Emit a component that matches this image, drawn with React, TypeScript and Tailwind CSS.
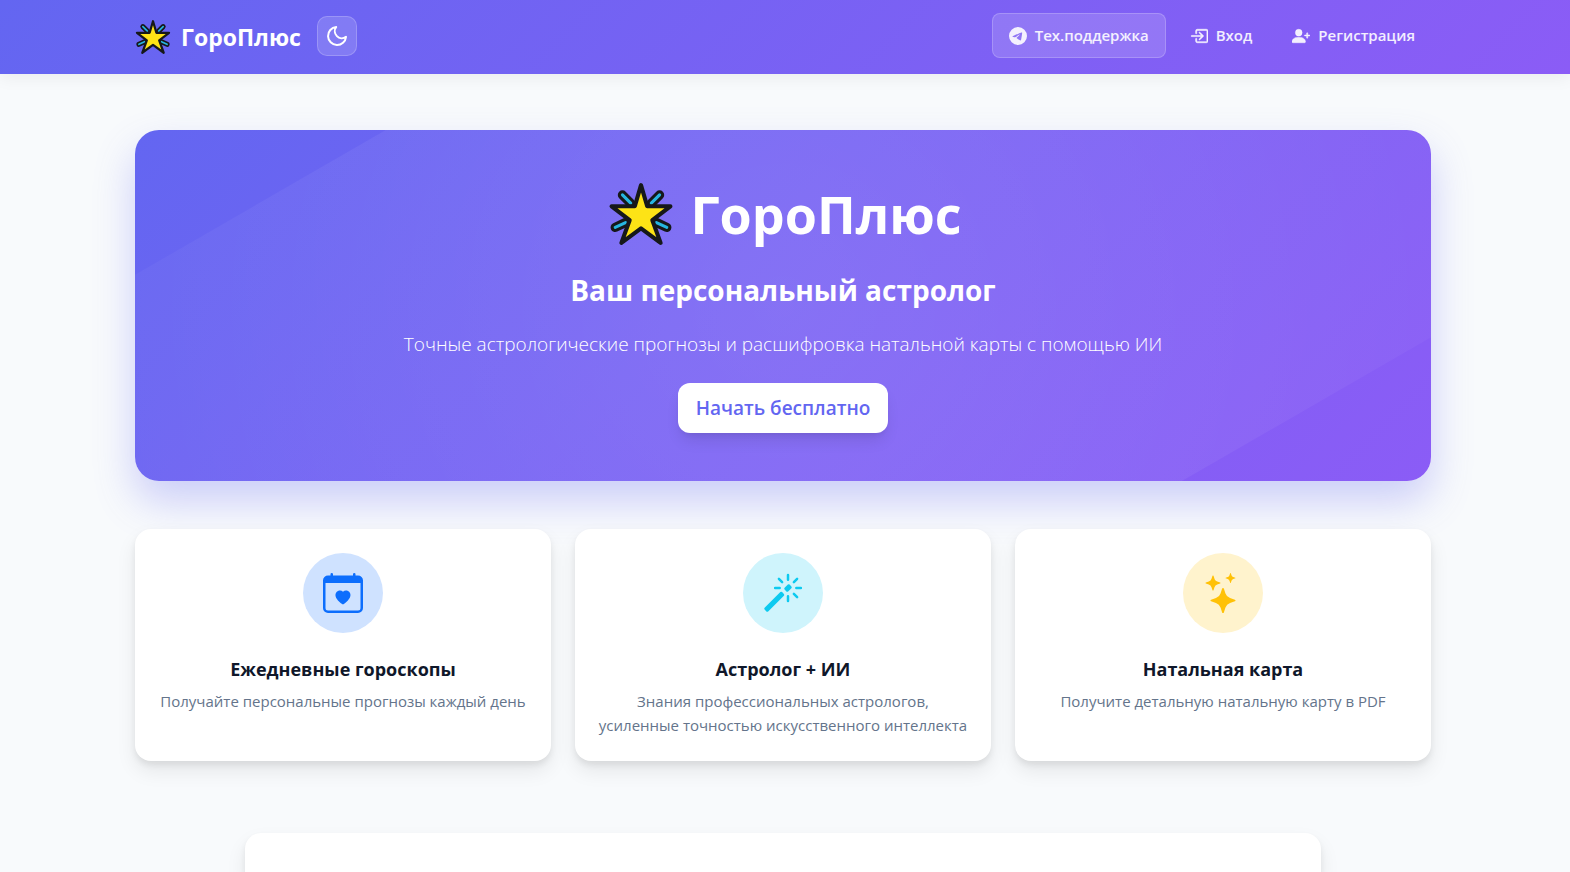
import { BsTelegram, BsBoxArrowInRight, BsPersonPlusFill, BsCalendarHeart, BsMagic, BsStars } from 'react-icons/bs'
import { FiMoon } from 'react-icons/fi'
import type { IconType } from 'react-icons'

type Feature = {
  title: string
  desc: string
  Icon: IconType
  color: string
}

const features: Feature[] = [
  { title: 'Ежедневные гороскопы', desc: 'Получайте персональные прогнозы каждый день', Icon: BsCalendarHeart, color: 'bg-[#cfe2ff] text-[#0d6efd]' },
  { title: 'Астролог + ИИ', desc: 'Знания профессиональных астрологов, усиленные точностью искусственного интеллекта', Icon: BsMagic, color: 'bg-[#cff4fc] text-[#0dcaf0]' },
  { title: 'Натальная карта', desc: 'Получите детальную натальную карту в PDF', Icon: BsStars, color: 'bg-[#fff3cd] text-[#ffc107]' },
]

function GlowingStar(props: { className: string }) {
  const rays = 'M14 13.5 22 21.5M50 13.5 42 21.5M7 45 17 40.3M57 45 47 40.3'
  return <svg viewBox="0 0 64 64" className={props.className} aria-hidden="true">
    <g strokeLinecap="round">
      <path d={rays} stroke="#16181a" strokeWidth="9" />
      <path d={rays} stroke="#26b6e0" strokeWidth="3" />
    </g>
    <path d="M32 4 38 24.5H60.5L43 38 51 60 32 46 13 60 21 38 3.5 24.5H26Z" fill="#fde316" stroke="#16181a" strokeWidth="4" strokeLinejoin="round" />
  </svg>
}

function Navbar() {
  return <nav className="relative bg-linear-135 from-[#6366f1] to-[#8b5cf6] pr-1 shadow-[0_4px_16px_rgba(0,0,0,0.06)]">
    <div className="mx-auto flex max-w-[1320px] items-center justify-between px-3 pt-[13px] pb-4">
      <div className="flex items-center gap-4">
        <a href="#" className="flex items-center gap-[10px] pt-[2px] text-[23px] leading-8 font-bold text-white">
          <GlowingStar className="size-9" />
          ГороПлюс
        </a>
        <button aria-label="Тёмная тема" className="flex size-10 cursor-pointer items-center justify-center rounded-[10px] border border-white/20 bg-white/15 text-2xl text-white">
          <FiMoon />
        </button>
      </div>
      <div className="flex items-center gap-2 text-[15px] font-semibold text-white/90">
        <a href="#support" className="flex h-[45px] items-center gap-2 rounded-lg border border-white/20 bg-white/15 px-4">
          <BsTelegram className="size-[18px]" />
          Тех.поддержка
        </a>
        <a href="#login" className="flex h-[45px] items-center gap-2 px-4">
          <BsBoxArrowInRight className="size-[18px] stroke-current stroke-[0.5]" />
          Вход
        </a>
        <a href="#register" className="flex h-[45px] items-center gap-2 px-4">
          <BsPersonPlusFill className="size-[18px] stroke-current stroke-[0.4]" />
          Регистрация
        </a>
      </div>
    </div>
  </nav>
}

function Hero() {
  return <section className="relative overflow-hidden rounded-3xl bg-linear-135 from-[#6366f1] to-[#8b5cf6] px-6 py-12 text-center text-white">
    {/* rotated glow behind the text */}
    <div className="absolute -top-1/2 -left-1/2 h-[200%] w-[200%] -rotate-30 bg-[radial-gradient(circle,rgba(255,255,255,0.1)_0%,transparent_70%)]" />
    <div className="relative flex flex-col items-center">
      <h1 className="mb-4 flex items-center gap-4 pl-1 text-[52px] leading-[72px] font-bold">
        <GlowingStar className="size-[66px]" />
        ГороПлюс
      </h1>
      <h2 className="mb-4 text-[28px] leading-12 font-bold">Ваш персональный астролог</h2>
      <p className="mb-6 text-[19px] leading-[29px] font-light">Точные астрологические прогнозы и расшифровка натальной карты с помощью ИИ</p>
      <a href="#register" className="rounded-xl bg-white px-[18px] py-[10px] text-[19px] leading-[30px] font-semibold text-[#6366f1] shadow-lg">
        Начать бесплатно
      </a>
    </div>
  </section>
}

function FeatureCard(props: { feature: Feature }) {
  const { title, desc, Icon, color } = props.feature
  return <div className="flex flex-col items-center rounded-2xl bg-white px-[21px] py-6 text-center shadow-[0_4px_6px_rgba(0,0,0,0.07),0_10px_20px_rgba(0,0,0,0.08)]">
    <div className={`mb-6 flex size-20 items-center justify-center rounded-full text-[40px] ${color}`}>
      <Icon />
    </div>
    <h3 className="mb-2 text-lg leading-6 font-bold text-[#0f172a]">{title}</h3>
    <p className="text-[15px] leading-6 text-[#64748b]">{desc}</p>
  </div>
}

export default function App() {
  return <div className="min-h-screen bg-[#f8fafc] font-['Open_Sans',sans-serif]">
    <Navbar />
    <div className="pr-1">
      <main className="mx-auto max-w-[1320px] px-3 pt-14">
        <div className="rounded-3xl shadow-[0_20px_40px_rgba(99,102,241,0.3)]">
          <Hero />
        </div>
        <div className="relative mt-12 grid gap-6 md:grid-cols-3">
          {features.map((f) => <FeatureCard key={f.title} feature={f} />)}
        </div>
        <div className="mx-auto mt-18 h-10 max-w-[1076px] rounded-t-2xl bg-white shadow-[0_4px_6px_rgba(0,0,0,0.07),0_10px_20px_rgba(0,0,0,0.08)]" />
      </main>
    </div>
  </div>
}
